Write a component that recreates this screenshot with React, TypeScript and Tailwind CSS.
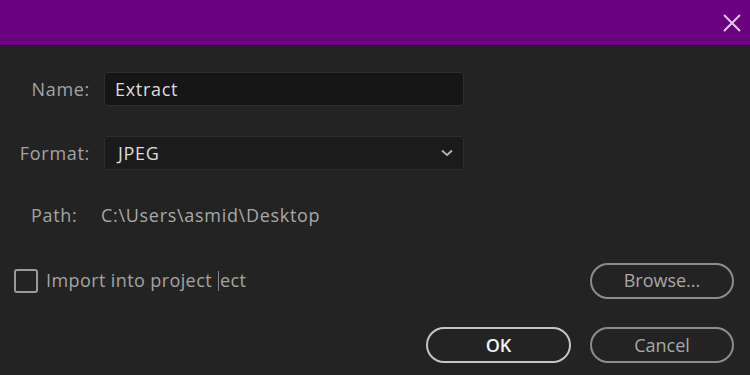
const CloseIcon = () => (
  <svg width="20" height="20" viewBox="0 0 20 20" className="text-[#e9c6f0]">
    <path d="M2 2 L18 18 M18 2 L2 18" stroke="currentColor" strokeWidth="2" fill="none" />
  </svg>
);

const Chevron = () => (
  <svg width="12" height="8" viewBox="0 0 12 8" className="text-[#b5b5b5]">
    <path d="M1 1.5 L6 6 L11 1.5" stroke="currentColor" strokeWidth="1.8" fill="none" />
  </svg>
);

const PillButton = ({
  label,
  primary,
}: {
  label: string;
  primary?: boolean;
}) => (
  <button
    className={
      primary
        ? "w-[145px] h-[36px] rounded-full border-2 border-[#c4c4c4] text-[#f2f2f2] font-semibold text-[18px]"
        : "w-[144px] h-[36px] rounded-full border-2 border-[#8c8c8c] text-[#a8a8a8] text-[18px]"
    }
  >
    {label}
  </button>
);

export default function App() {
  return (
    <div
      className="w-[750px] h-[375px] bg-[#232323] flex flex-col overflow-hidden"
      style={{ fontFamily: '"Open Sans", "Noto Sans", sans-serif' }}
    >
      <div className="h-[46px] shrink-0 bg-[#6a017e] border-b border-[#141414] flex justify-end items-center pr-[8px]">
        <CloseIcon />
      </div>

      <div className="flex flex-col pt-[26px] text-[18px] tracking-[0.7px]">
        <div className="flex items-center h-[34px]">
          <span className="w-[90px] text-right text-[#a3a3a3]">Name:</span>
          <div className="ml-[14px] w-[360px] h-full bg-[#151515] border border-[#2e2e2e] rounded-[3px] flex items-center pl-[10px] text-[#dcdcdc]">
            Extract
          </div>
        </div>

        <div className="flex items-center h-[34px] mt-[30px]">
          <span className="w-[90px] text-right text-[#a3a3a3]">Format:</span>
          <div className="ml-[14px] w-[360px] h-full bg-[#1b1b1b] border border-[#2e2e2e] rounded-[3px] flex items-center justify-between pl-[13px] pr-[10px] text-[#dcdcdc]">
            <span>JPEG</span>
            <Chevron />
          </div>
        </div>

        <div className="flex items-center h-[34px] mt-[28px] pl-[31px] text-[#a3a3a3]">
          <span className="w-[70px]">Path:</span>
          <span className="text-[#a8a8a8]">C:\Users\asmid\Desktop</span>
        </div>

        <div className="flex items-center justify-between h-[37px] mt-[30px] pl-[14px] pr-[16px]">
          <div className="flex items-center gap-[8px] text-[#a3a3a3] tracking-[0.4px]">
            <div className="w-[24px] h-[24px] border-2 border-[#9a9a9a] rounded-[3px]" />
            <span className="flex items-center">
              <span>Import into project</span>
              <span className="inline-block w-px h-[20px] bg-[#8a8a8a] ml-[6px] mr-[1px]" />
              <span>ect</span>
            </span>
          </div>
          <div className="tracking-normal">
            <PillButton label="Browse..." />
          </div>
        </div>

        <div className="flex items-center justify-end gap-[19px] h-[36px] mt-[28px] pr-[16px] tracking-normal">
          <PillButton label="OK" primary />
          <PillButton label="Cancel" />
        </div>
      </div>
    </div>
  );
}
